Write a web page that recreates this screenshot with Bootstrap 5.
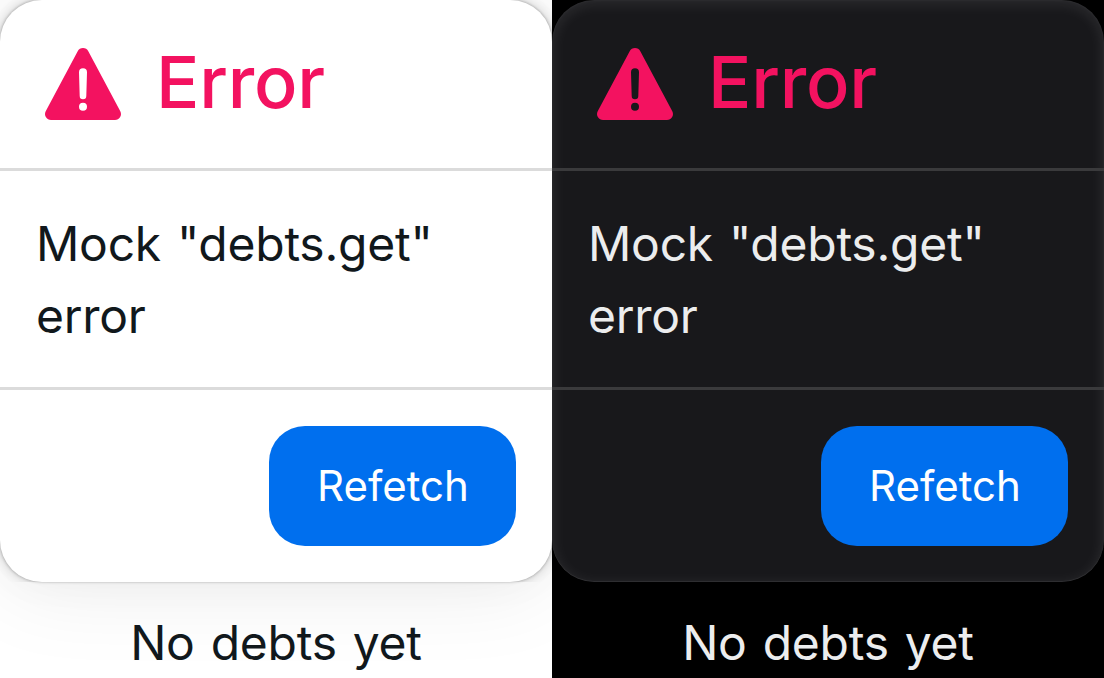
<!DOCTYPE html>
<html lang="en">
<head>
<meta charset="utf-8">
<title>Debts</title>
<link href="https://cdn.jsdelivr.net/npm/bootstrap@5.3.0/dist/css/bootstrap.min.css" rel="stylesheet">
<style>
body{font-family:Inter,sans-serif;font-size:48px;line-height:72px;letter-spacing:-.25px;word-spacing:2.8px;width:1104px;height:678px;overflow:hidden}
.pane{height:678px;background:#fff;color:#11181c;overflow:hidden}
.error-card{height:582px;border-radius:42px;background:#fff;box-shadow:0 0 45px rgba(0,0,0,.03),0 6px 90px rgba(0,0,0,.08),0 0 3px rgba(0,0,0,.3)}
/* soft edge that shows only in the rounded corners */
.corners{height:582px;overflow:hidden;pointer-events:none}
.corners::before{content:"";display:block;height:582px;border-radius:42px;box-shadow:0 0 12px rgba(0,0,0,.2)}
.pane.dark{background:#000;color:#ecedee}
.dark .error-card{background:#18181b;box-shadow:inset 0 -1px 0 rgba(255,255,255,.05),inset 0 0 3px rgba(255,255,255,.06),inset 0 3px 15px rgba(255,255,255,.1)}
.head{height:168px;padding:0 36px;gap:24px}
.head svg{width:96px;height:96px}
.title{font-size:72px;line-height:108px;font-weight:500;color:#f31260;margin-top:-5px}
.rule{height:3px;background:#dbdbdb}
.dark .rule{background:#3a3a3c}
.msg{height:216px;padding:36px}
.foot{padding:36px}
.btn-refetch,.btn-refetch:hover{width:247px;height:120px;border-radius:36px;background:#006fee;color:#fff;font-size:42px;line-height:60px;border:0;letter-spacing:0;padding:0 0 0 1px}
.empty{padding-top:25px}
.msg{padding-top:37px}
</style>
</head>
<body>
<div class="d-flex">
<section class="pane w-50 position-relative">
<div class="corners position-absolute top-0 start-0 w-100"></div>
<div class="error-card position-relative">
<div class="head d-flex align-items-center"><svg viewBox="0 0 96 96" aria-hidden="true"><path fill="#f31260" fill-rule="evenodd" d="M52.3 15.2L84.3 75.2A6 6 0 0 1 79 84H15A6 6 0 0 1 9.7 75.2L41.7 15.2A6 6 0 0 1 52.3 15.2ZM43 36.2L43.7 60A3.3 3.3 0 0 0 50.3 60L51 36.2A4 4 0 0 0 43 36.2ZM43 70.7A4 4 0 0 0 51 70.7A4 4 0 0 0 43 70.7Z"/></svg><span class="title">Error</span></div>
<div class="rule"></div>
<div class="msg">Mock "debts.get" error</div>
<div class="rule"></div>
<div class="foot d-flex justify-content-end"><button type="button" class="btn btn-refetch">Refetch</button></div>
</div>
<div class="empty text-center position-relative">No debts yet</div>
</section>
<section class="pane dark w-50">
<div class="error-card">
<div class="head d-flex align-items-center"><svg viewBox="0 0 96 96" aria-hidden="true"><path fill="#f31260" fill-rule="evenodd" d="M52.3 15.2L84.3 75.2A6 6 0 0 1 79 84H15A6 6 0 0 1 9.7 75.2L41.7 15.2A6 6 0 0 1 52.3 15.2ZM43 36.2L43.7 60A3.3 3.3 0 0 0 50.3 60L51 36.2A4 4 0 0 0 43 36.2ZM43 70.7A4 4 0 0 0 51 70.7A4 4 0 0 0 43 70.7Z"/></svg><span class="title">Error</span></div>
<div class="rule"></div>
<div class="msg">Mock "debts.get" error</div>
<div class="rule"></div>
<div class="foot d-flex justify-content-end"><button type="button" class="btn btn-refetch">Refetch</button></div>
</div>
<div class="empty text-center">No debts yet</div>
</section>
</div>
<script src="https://cdn.jsdelivr.net/npm/bootstrap@5.3.0/dist/js/bootstrap.bundle.min.js"></script>
</body>
</html>
